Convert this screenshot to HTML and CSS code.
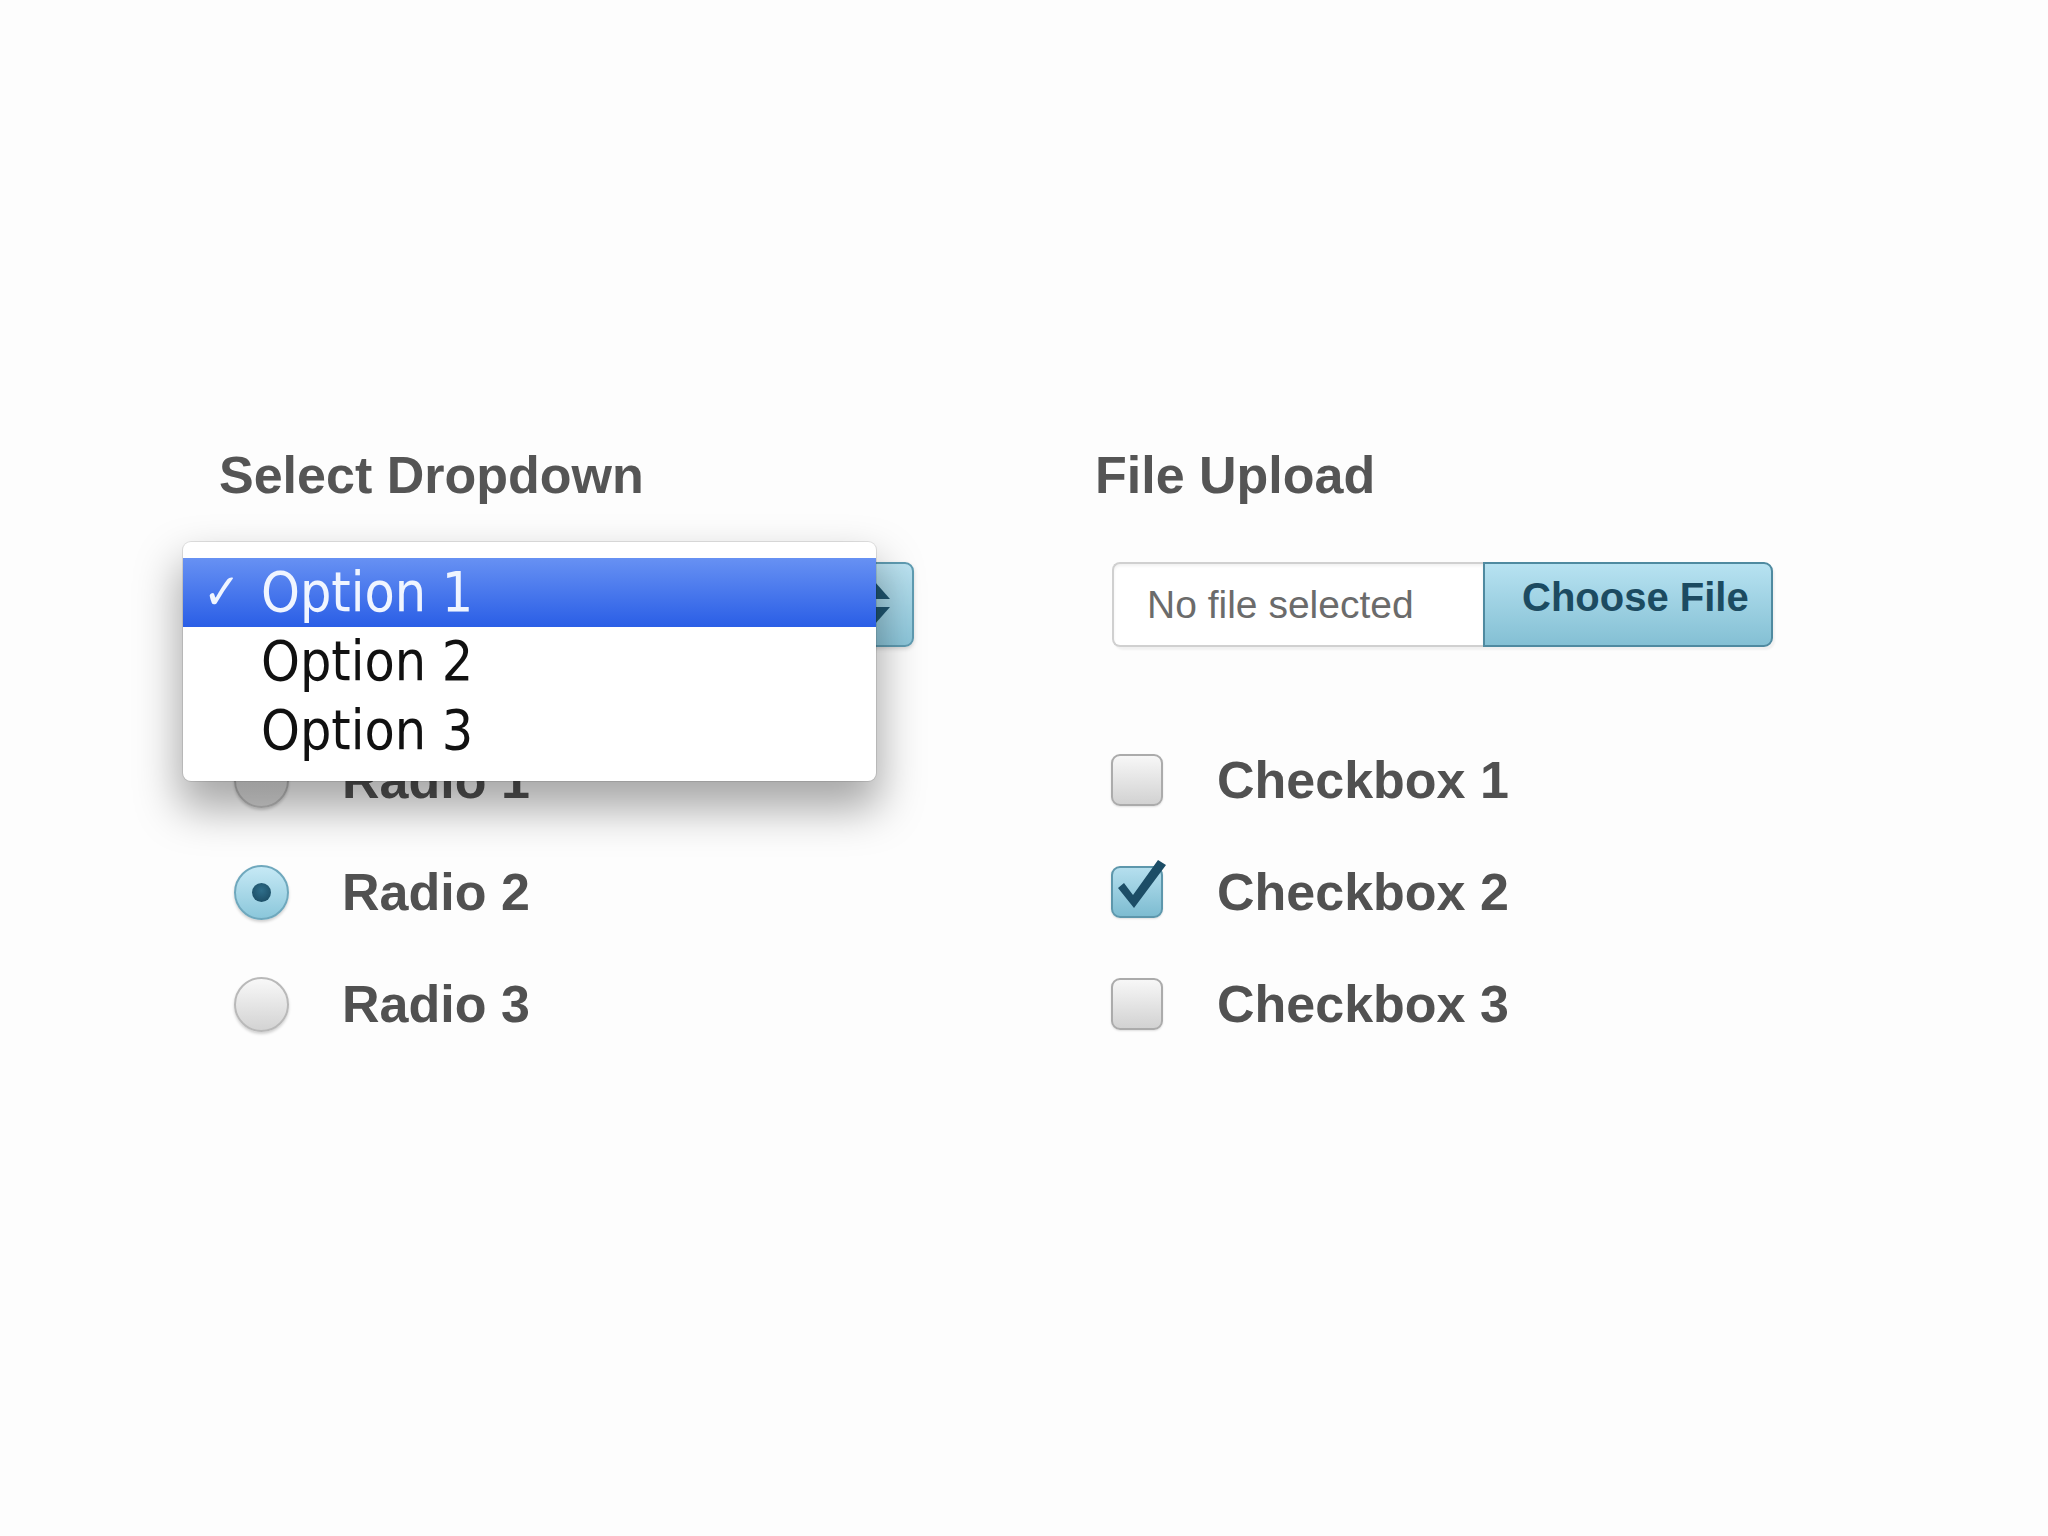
FILE: index.html
```html
<!DOCTYPE html>
<html lang="en">
<head>
<meta charset="utf-8">
<title>Form controls</title>
<link rel="stylesheet" href="styles.css">
</head>
<body>
<main class="page">
  <section class="col col-select">
    <h2 class="heading">Select Dropdown</h2>
    <div class="select">
      <svg class="select-arrows" width="32" height="50" viewBox="0 0 32 50" aria-hidden="true">
        <polygon points="1,19 16,2 31,19" fill="#1f5671"/>
        <polygon points="1,27 16,44 31,27" fill="#1f5671"/>
      </svg>
      <ul class="menu">
        <li class="menu-item is-selected"><span class="tick">✓</span>Option 1</li>
        <li class="menu-item"><span class="tick"></span>Option 2</li>
        <li class="menu-item"><span class="tick"></span>Option 3</li>
      </ul>
    </div>
    <ul class="choices">
      <li class="choice"><span class="radio"></span><span class="label">Radio 1</span></li>
      <li class="choice"><span class="radio is-checked"></span><span class="label">Radio 2</span></li>
      <li class="choice"><span class="radio"></span><span class="label">Radio 3</span></li>
    </ul>
  </section>
  <section class="col col-upload">
    <h2 class="heading">File Upload</h2>
    <div class="file">
      <span class="file-name">No file selected</span>
      <span class="file-btn">Choose File</span>
    </div>
    <ul class="choices">
      <li class="choice"><span class="checkbox"></span><span class="label">Checkbox 1</span></li>
      <li class="choice"><span class="checkbox is-checked"><svg class="check" width="60" height="60" viewBox="0 0 60 60" aria-hidden="true"><path d="M7 22 L13 17 L22 29 L47 -6 L55 -1 L23 42 Z" fill="#1c4d66"/></svg></span><span class="label">Checkbox 2</span></li>
      <li class="choice"><span class="checkbox"></span><span class="label">Checkbox 3</span></li>
    </ul>
  </section>
</main>
</body>
</html>
```

FILE: styles.css
```css
html, body {
  margin: 0;
  padding: 0;
}

body {
  background: #fdfdfd;
  font-family: "Liberation Sans", Arial, Helvetica, sans-serif;
  overflow: hidden;
  height: 1536px;
}

.page {
  display: flex;
  padding: 445px 0 0 219px;
}

.col-select {
  width: 876px;
}

.col-upload {
  flex: 1;
}

.heading {
  margin: 0;
  font-size: 52px;
  line-height: 60px;
  font-weight: 700;
  color: #555555;
}

/* ---------- select ---------- */
.select {
  position: relative;
  margin: 57px 0 0 14px;
  width: 681px;
  height: 85px;
  box-sizing: border-box;
  border: 2px solid #5f9cb2;
  border-radius: 9px;
  background: linear-gradient(#bce3f1, #8cc6da);
  box-shadow: 0 2px 4px rgba(0, 0, 0, 0.15);
}

.select-arrows {
  position: absolute;
  right: 21px;
  top: 16px;
}

.menu {
  position: absolute;
  z-index: 10;
  left: -52px;
  top: -22px;
  width: 693px;
  margin: 0;
  padding: 16px 0;
  list-style: none;
  background: #ffffff;
  border-radius: 8px;
  box-shadow: 0 0 0 1px rgba(0, 0, 0, 0.1), 0 24px 44px 4px rgba(0, 0, 0, 0.34);
}

.menu-item {
  display: flex;
  align-items: center;
  height: 69px;
  padding-left: 20px;
  font-family: "DejaVu Sans Condensed", "DejaVu Sans", sans-serif;
  font-stretch: condensed;
  font-size: 55px;
  line-height: 69px;
  color: #111111;
}

.menu-item.is-selected {
  background: linear-gradient(#6791f3, #2a5ee6);
  color: #f0f5ff;
}

.tick {
  display: inline-block;
  width: 58px;
  font-size: 50px;
}

/* ---------- choices ---------- */
.choices {
  list-style: none;
  margin: 77px 0 0 15px;
  padding: 0;
}

.col-upload .choices {
  margin-left: 16px;
}

.choice {
  display: flex;
  align-items: center;
  height: 112px;
  gap: 53px;
}

.col-upload .choice {
  gap: 54px;
}

.label {
  font-size: 52px;
  line-height: 60px;
  font-weight: 700;
  color: #515151;
}

.radio {
  flex: none;
  width: 55px;
  height: 55px;
  box-sizing: border-box;
  border-radius: 50%;
  border: 2px solid #b9b9b9;
  background: linear-gradient(#f8f8f8, #d3d3d3);
  box-shadow: 0 2px 3px rgba(0, 0, 0, 0.18);
  display: flex;
  align-items: center;
  justify-content: center;
}

.radio.is-checked {
  border-color: #6fa8bd;
  background: linear-gradient(#c6e9f5, #8bc7db);
}

.radio.is-checked::after {
  content: "";
  width: 19px;
  height: 19px;
  border-radius: 50%;
  background: radial-gradient(circle at 50% 40%, #2f6e8a, #17465d);
}

.checkbox {
  position: relative;
  flex: none;
  width: 52px;
  height: 52px;
  box-sizing: border-box;
  border-radius: 9px;
  border: 2px solid #ababab;
  background: linear-gradient(#f7f7f7, #d2d2d2);
  box-shadow: 0 1px 2px rgba(0, 0, 0, 0.12);
}

.checkbox.is-checked {
  border-color: #5d97ac;
  background: linear-gradient(#b5dfee, #7dbcd1);
}

.check {
  position: absolute;
  left: -2px;
  top: -2px;
  overflow: visible;
}

/* ---------- file input ---------- */
.file {
  display: flex;
  margin: 57px 0 0 17px;
  width: 661px;
  height: 85px;
  box-shadow: 2px 3px 2px rgba(0, 0, 0, 0.05);
  border-radius: 9px;
}

.file-name {
  display: flex;
  align-items: center;
  width: 371px;
  box-sizing: border-box;
  padding: 0 0 0 33px;
  border: 2px solid #d0d0d0;
  border-right: none;
  border-radius: 8px 0 0 8px;
  background: #ffffff;
  box-shadow: inset 0 2px 3px rgba(0, 0, 0, 0.06);
  font-size: 39px;
  color: #6b6b6b;
}

.file-btn {
  flex: 1;
  display: flex;
  align-items: center;
  box-sizing: border-box;
  padding: 0 0 14px 37px;
  border: 2px solid #4f8aa0;
  border-radius: 0 9px 9px 0;
  background: linear-gradient(#b7e2f1, #84c0d4);
  font-size: 40px;
  font-weight: 700;
  color: #1c4b61;
}
```
